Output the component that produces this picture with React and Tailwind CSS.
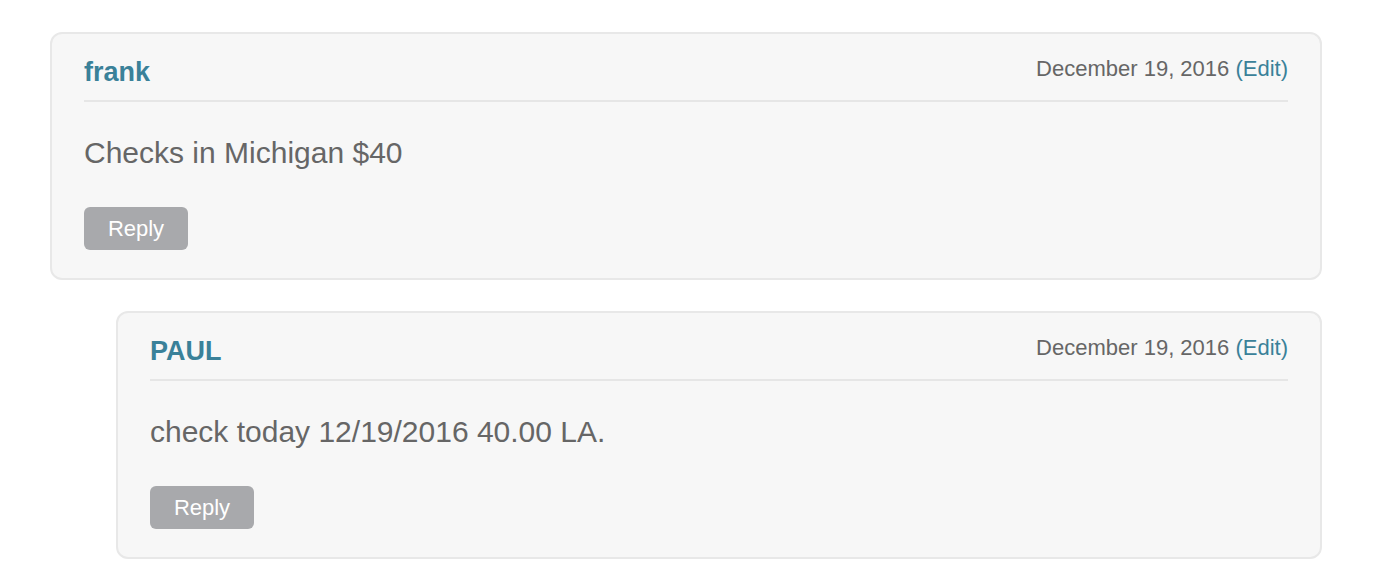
const comments = [
  { author: 'frank', date: 'December 19, 2016', body: 'Checks in Michigan $40', indent: false },
  { author: 'PAUL', date: 'December 19, 2016', body: 'check today 12/19/2016 40.00 LA.', indent: true },
];

const Comment = ({ author, date, body, indent }) => (
  <div
    className={
      'bg-[#f7f7f7] border-2 border-[#e8e8e8] rounded-[12px] px-[32px] pt-[22px] pb-[28px] ' +
      (indent ? 'ml-[66px]' : '')
    }
  >
    <div className="flex justify-between items-start border-b-2 border-[#e6e6e6] pb-[12px]">
      <span className="text-[27px] leading-[32px] font-bold text-[#3a8199]">{author}</span>
      <span className="mt-[2px] text-[22px] leading-[22px] text-[#666]">
        {date} <a href="#" className="text-[#3a8199]">(Edit)</a>
      </span>
    </div>
    <p className="mt-[31px] text-[30px] leading-[40px] text-[#666]">{body}</p>
    <button className="mt-[34px] w-[104px] h-[43px] rounded-[6px] bg-[#a8a9ac] text-white text-[22px] leading-none">
      Reply
    </button>
  </div>
);

export default function App() {
  return (
    <div
      className="min-h-screen bg-white pt-[32px] pl-[50px]"
      style={{ fontFamily: '"Liberation Sans", Arial, sans-serif' }}
    >
      <div className="w-[1272px] flex flex-col gap-[31px]">
        {comments.map((c) => (
          <Comment key={c.author} {...c} />
        ))}
      </div>
    </div>
  );
}
